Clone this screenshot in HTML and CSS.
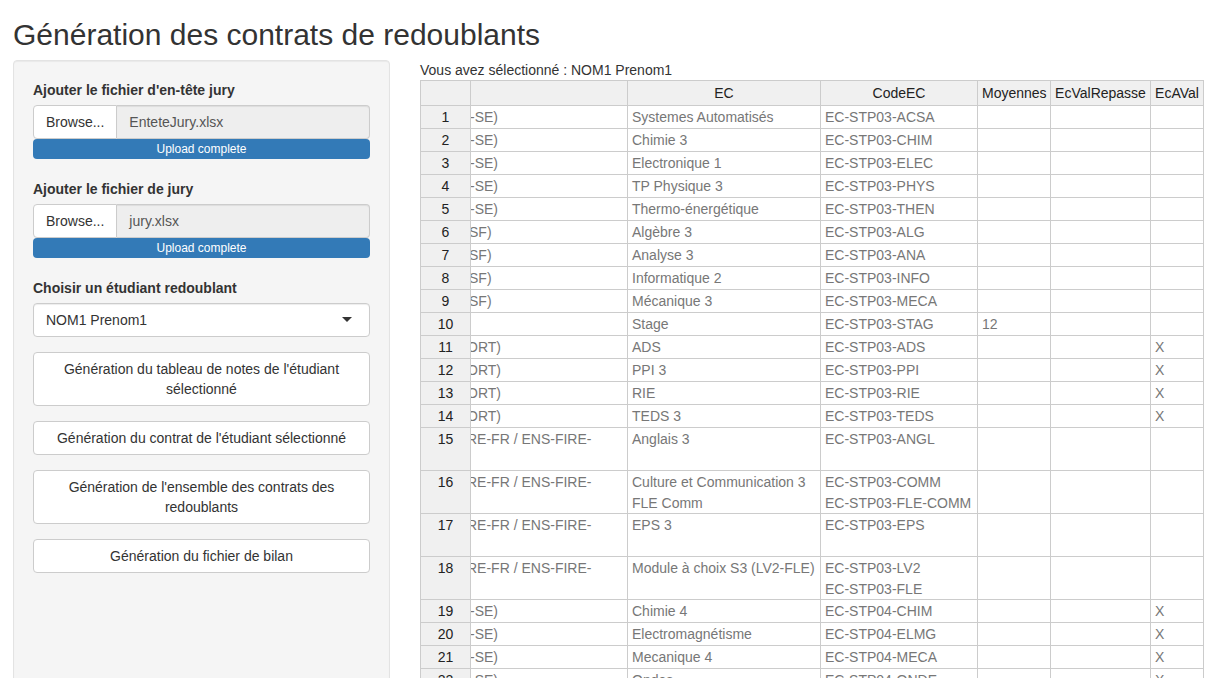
FILE: index.html
```html
<!DOCTYPE html>
<html lang="fr">
<head>
<meta charset="utf-8">
<title>Génération des contrats de redoublants</title>
<link rel="stylesheet" href="styles.css">
</head>
<body>
<div class="page">
  <h2 class="title">Génération des contrats de redoublants</h2>
  <div class="layout">
    <aside class="well">
      <div class="form-group">
        <label class="ctl-label">Ajouter le fichier d'en-tête jury</label>
        <div class="file-group">
          <span class="browse">Browse...</span>
          <span class="file-name">EnteteJury.xlsx</span>
        </div>
        <div class="progress"><div class="progress-bar">Upload complete</div></div>
      </div>
      <div class="form-group">
        <label class="ctl-label">Ajouter le fichier de jury</label>
        <div class="file-group">
          <span class="browse">Browse...</span>
          <span class="file-name">jury.xlsx</span>
        </div>
        <div class="progress"><div class="progress-bar">Upload complete</div></div>
      </div>
      <div class="form-group select-group">
        <label class="ctl-label">Choisir un étudiant redoublant</label>
        <div class="select-box">
          <span class="select-value">NOM1 Prenom1</span>
          <span class="caret"></span>
        </div>
      </div>
      <div class="actions">
        <button class="btn" type="button">Génération du tableau de notes de l'étudiant sélectionné</button>
        <button class="btn" type="button">Génération du contrat de l'étudiant sélectionné</button>
        <button class="btn" type="button">Génération de l'ensemble des contrats des redoublants</button>
        <button class="btn" type="button">Génération du fichier de bilan</button>
      </div>
    </aside>
    <main class="main">
      <div class="selected">Vous avez sélectionné : NOM1 Prenom1</div>
      <table class="grid">
        <thead>
          <tr>
            <th class="rh w-rh"></th>
            <th class="w-c2"></th>
            <th class="w-ec">EC</th>
            <th class="w-code">CodeEC</th>
            <th class="w-moy">Moyennes</th>
            <th class="w-rep">EcValRepasse</th>
            <th class="w-aval">EcAVal</th>
          </tr>
        </thead>
        <tbody>
          <tr><th class="rh">1</th><td class="clip"><span class="i1">-SE)</span></td><td>Systemes Automatisés</td><td>EC-STP03-ACSA</td><td></td><td></td><td></td></tr>
          <tr><th class="rh">2</th><td class="clip"><span class="i1">-SE)</span></td><td>Chimie 3</td><td>EC-STP03-CHIM</td><td></td><td></td><td></td></tr>
          <tr><th class="rh">3</th><td class="clip"><span class="i1">-SE)</span></td><td>Electronique 1</td><td>EC-STP03-ELEC</td><td></td><td></td><td></td></tr>
          <tr><th class="rh">4</th><td class="clip"><span class="i1">-SE)</span></td><td>TP Physique 3</td><td>EC-STP03-PHYS</td><td></td><td></td><td></td></tr>
          <tr><th class="rh">5</th><td class="clip"><span class="i1">-SE)</span></td><td>Thermo-énergétique</td><td>EC-STP03-THEN</td><td></td><td></td><td></td></tr>
          <tr><th class="rh">6</th><td class="clip"><span class="i2">SF)</span></td><td>Algèbre 3</td><td>EC-STP03-ALG</td><td></td><td></td><td></td></tr>
          <tr><th class="rh">7</th><td class="clip"><span class="i2">SF)</span></td><td>Analyse 3</td><td>EC-STP03-ANA</td><td></td><td></td><td></td></tr>
          <tr><th class="rh">8</th><td class="clip"><span class="i2">SF)</span></td><td>Informatique 2</td><td>EC-STP03-INFO</td><td></td><td></td><td></td></tr>
          <tr><th class="rh">9</th><td class="clip"><span class="i2">SF)</span></td><td>Mécanique 3</td><td>EC-STP03-MECA</td><td></td><td></td><td></td></tr>
          <tr><th class="rh">10</th><td class="clip"></td><td>Stage</td><td>EC-STP03-STAG</td><td>12</td><td></td><td></td></tr>
          <tr><th class="rh">11</th><td class="clip"><span class="i3">ORT)</span></td><td>ADS</td><td>EC-STP03-ADS</td><td></td><td></td><td>X</td></tr>
          <tr><th class="rh">12</th><td class="clip"><span class="i3">ORT)</span></td><td>PPI 3</td><td>EC-STP03-PPI</td><td></td><td></td><td>X</td></tr>
          <tr><th class="rh">13</th><td class="clip"><span class="i3">ORT)</span></td><td>RIE</td><td>EC-STP03-RIE</td><td></td><td></td><td>X</td></tr>
          <tr><th class="rh">14</th><td class="clip"><span class="i3">ORT)</span></td><td>TEDS 3</td><td>EC-STP03-TEDS</td><td></td><td></td><td>X</td></tr>
          <tr class="tall"><th class="rh">15</th><td class="clip"><span class="i3">RE-FR / ENS-FIRE-</span></td><td>Anglais 3</td><td>EC-STP03-ANGL</td><td></td><td></td><td></td></tr>
          <tr class="tall"><th class="rh">16</th><td class="clip"><span class="i3">RE-FR / ENS-FIRE-</span></td><td>Culture et Communication 3<br>FLE Comm</td><td>EC-STP03-COMM<br>EC-STP03-FLE-COMM</td><td></td><td></td><td></td></tr>
          <tr class="tall"><th class="rh">17</th><td class="clip"><span class="i3">RE-FR / ENS-FIRE-</span></td><td>EPS 3</td><td>EC-STP03-EPS</td><td></td><td></td><td></td></tr>
          <tr class="tall"><th class="rh">18</th><td class="clip"><span class="i3">RE-FR / ENS-FIRE-</span></td><td>Module à choix S3 (LV2-FLE)</td><td>EC-STP03-LV2<br>EC-STP03-FLE</td><td></td><td></td><td></td></tr>
          <tr><th class="rh">19</th><td class="clip"><span class="i1">-SE)</span></td><td>Chimie 4</td><td>EC-STP04-CHIM</td><td></td><td></td><td>X</td></tr>
          <tr><th class="rh">20</th><td class="clip"><span class="i1">-SE)</span></td><td>Electromagnétisme</td><td>EC-STP04-ELMG</td><td></td><td></td><td>X</td></tr>
          <tr><th class="rh">21</th><td class="clip"><span class="i1">-SE)</span></td><td>Mecanique 4</td><td>EC-STP04-MECA</td><td></td><td></td><td>X</td></tr>
          <tr><th class="rh">22</th><td class="clip"><span class="i1">-SE)</span></td><td>Ondes</td><td>EC-STP04-ONDE</td><td></td><td></td><td>X</td></tr>
        </tbody>
      </table>
    </main>
  </div>
</div>
</body>
</html>
```

FILE: styles.css
```css
* { box-sizing: border-box; }

html, body {
  margin: 0;
  height: 100%;
  overflow: hidden;
}

body {
  font-family: "Liberation Sans", Arial, Helvetica, sans-serif;
  font-size: 14px;
  line-height: 20px;
  color: #333;
  background: #fff;
}

.page {
  padding: 0 13px;
}

.title {
  font-size: 30px;
  font-weight: normal;
  line-height: 33px;
  margin: 18px 0 9px;
  color: #333;
}

.layout {
  display: flex;
  align-items: flex-start;
  gap: 30px;
}

/* Sidebar well */
.well {
  flex: none;
  width: 377px;
  min-height: 640px;
  background: #f5f5f5;
  border: 1px solid #e3e3e3;
  border-radius: 4px;
  box-shadow: inset 0 1px 1px rgba(0, 0, 0, 0.05);
  padding: 19px;
  display: flex;
  flex-direction: column;
}

.form-group {
  display: flex;
  flex-direction: column;
  margin-bottom: 20px;
}

.select-group {
  margin-bottom: 15px;
}

.ctl-label {
  font-weight: bold;
  margin-bottom: 5px;
  color: #333;
}

.file-group {
  display: flex;
  height: 34px;
}

.browse {
  flex: none;
  background: #fff;
  border: 1px solid #ccc;
  border-radius: 4px 0 0 4px;
  padding: 6px 12px;
  color: #333;
}

.file-name {
  flex: 1;
  background: #eee;
  border: 1px solid #ccc;
  border-left: none;
  border-radius: 0 4px 4px 0;
  padding: 6px 12px;
  color: #555;
  box-shadow: inset 0 1px 1px rgba(0, 0, 0, 0.075);
}

.progress {
  height: 20px;
  margin-top: 0;
  background: #f5f5f5;
  border-radius: 4px;
  overflow: hidden;
}

.progress-bar {
  width: 100%;
  height: 20px;
  background: #337ab7;
  color: #fff;
  font-size: 12px;
  line-height: 20px;
  text-align: center;
}

.select-box {
  position: relative;
  height: 34px;
  background: #fff;
  border: 1px solid #ccc;
  border-radius: 4px;
  padding: 6px 12px;
  box-shadow: inset 0 1px 1px rgba(0, 0, 0, 0.075);
  color: #333;
}

.caret {
  position: absolute;
  right: 17px;
  top: 50%;
  margin-top: -3px;
  width: 0;
  height: 0;
  border-style: solid;
  border-width: 5px 5px 0 5px;
  border-color: #333 transparent transparent transparent;
}

.actions {
  display: flex;
  flex-direction: column;
  gap: 15px;
}

.btn {
  display: block;
  width: 100%;
  font-family: inherit;
  font-size: 14px;
  line-height: 20px;
  color: #333;
  background: #fff;
  border: 1px solid #ccc;
  border-radius: 4px;
  padding: 6px 12px;
  text-align: center;
  white-space: normal;
  cursor: pointer;
}

/* Main panel */
.main {
  flex: none;
  width: 784px;
}

.selected {
  color: #333;
  line-height: 20px;
}

.grid {
  table-layout: fixed;
  width: 784px;
  border-collapse: separate;
  border-spacing: 0;
  font-size: 14px;
  line-height: 21px;
}

.grid th,
.grid td {
  border-right: 1px solid #ccc;
  border-bottom: 1px solid #ccc;
  height: 23px;
  padding: 1px 4px 0;
  vertical-align: top;
  overflow: hidden;
  white-space: nowrap;
}

.grid thead th {
  border-top: 1px solid #ccc;
  background: #f0f0f0;
  color: #222;
  font-weight: normal;
  text-align: center;
  height: 26px;
  line-height: 24px;
  padding: 0 4px;
}

.grid .rh {
  border-left: 1px solid #ccc;
  background: #f0f0f0;
  color: #222;
  font-weight: normal;
  text-align: center;
}

.grid td {
  color: #777;
  background: #fff;
  text-align: left;
}

.grid .tall th,
.grid .tall td {
  height: 43px;
  line-height: 20.5px;
}

.grid td.clip {
  padding: 1px 0 0;
}

.clip span {
  display: block;
}

.clip .i1 { margin-left: -1px; }
.clip .i2 { margin-left: -2px; }
.clip .i3 { margin-left: -4px; }

.w-rh { width: 51px; }
.w-c2 { width: 157px; }
.w-ec { width: 193px; }
.w-code { width: 157px; }
.w-moy { width: 73px; }
.w-rep { width: 100px; }
.w-aval { width: 53px; }
```
